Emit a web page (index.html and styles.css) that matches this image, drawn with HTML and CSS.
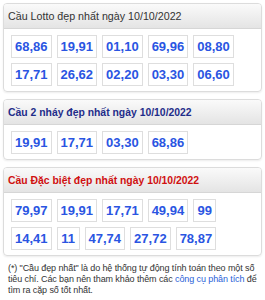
FILE: index.html
```html
<!DOCTYPE html>
<html lang="vi">
<head>
<meta charset="utf-8">
<link rel="stylesheet" href="styles.css">
</head>
<body>
<div class="page">
  <div class="card">
    <div class="card-head plain">Cầu Lotto đẹp nhất ngày 10/10/2022</div>
    <div class="card-body">
      <span class="num">68,86</span><span class="num">19,91</span><span class="num">01,10</span><span class="num">69,96</span><span class="num">08,80</span>
      <span class="num">17,71</span><span class="num">26,62</span><span class="num">02,20</span><span class="num">03,30</span><span class="num">06,60</span>
    </div>
  </div>
  <div class="card">
    <div class="card-head blue">Cầu 2 nháy đẹp nhất ngày 10/10/2022</div>
    <div class="card-body">
      <span class="num">19,91</span><span class="num">17,71</span><span class="num">03,30</span><span class="num">68,86</span>
    </div>
  </div>
  <div class="card">
    <div class="card-head red">Cầu Đặc biệt đẹp nhất ngày 10/10/2022</div>
    <div class="card-body">
      <span class="num">79,97</span><span class="num">19,91</span><span class="num">17,71</span><span class="num">49,94</span><span class="num">99</span>
      <span class="num">14,41</span><span class="num">11</span><span class="num">47,74</span><span class="num">27,72</span><span class="num">78,87</span>
    </div>
  </div>
  <div class="note">(*) "Cầu đẹp nhất" là do hệ thống tự động tính toán theo một số tiêu chí. Các bạn nên tham khảo thêm các <span class="link">công cụ phân tích</span> để tìm ra cặp số tốt nhất.</div>
</div>
</body>
</html>
```
FILE: styles.css
```css
html, body { margin: 0; padding: 0; background: #fff; }
body { font-family: "Liberation Sans", Arial, sans-serif; }
.page { padding: 3px 3px 0 3px; display: flex; flex-direction: column; gap: 7px; }
.card {
  border: 1px solid #dcdcdc;
  border-radius: 4px;
  box-shadow: 0 1px 2px rgba(0,0,0,0.08);
  overflow: hidden;
}
.card-head {
  height: 24px;
  line-height: 25px;
  padding: 0 4px;
  font-size: 10.7px;
  background: linear-gradient(#fafafa, #e4e4e4);
  border-bottom: 1px solid #d6d6d6;
  white-space: nowrap;
}
.card-head.plain { color: #333; }
.card-head.blue { color: #1f2d8a; font-weight: bold; font-size: 10.4px; }
.card-head.red { color: #d01010; font-weight: bold; font-size: 10.4px; }
.card-body {
  display: flex;
  flex-wrap: wrap;
  gap: 5px;
  padding: 6px 7px 5px 7px;
}
.num {
  display: block;
  height: 21px;
  line-height: 21px;
  min-width: 15px;
  padding: 0 3px;
  text-align: center;
  border: 1px solid #dedede;
  color: #2a55e2;
  font-weight: bold;
  font-size: 13px;
}
.note {
  font-size: 9px;
  line-height: 11px;
  color: #333;
  letter-spacing: -0.1px;
  padding: 0 0 4px 5px;
  border-bottom: 1px solid #e0e0e0;
}
.link { color: #2a62d8; }
```
